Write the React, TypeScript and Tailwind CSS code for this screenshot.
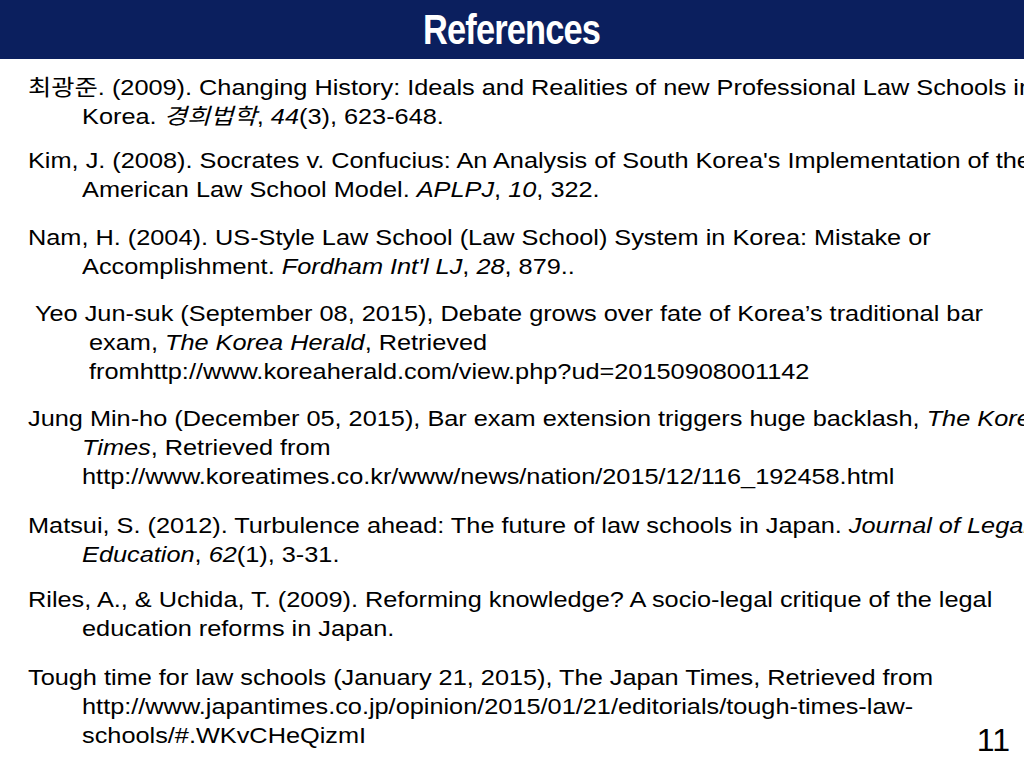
export default function App() {
  const refs: { indent?: boolean; lines: React.ReactNode[]; mb: string }[] = [
    {
      lines: [
        <>최광준. (2009). Changing History: Ideals and Realities of new Professional Law Schools in</>,
        <>Korea. <i>경희법학</i>, <i>44</i>(3), 623-648.</>,
      ],
      mb: "mb-[15px]",
    },
    {
      lines: [
        <>Kim, J. (2008). Socrates v. Confucius: An Analysis of South Korea's Implementation of the</>,
        <>American Law School Model. <i>APLPJ</i>, <i>10</i>, 322.</>,
      ],
      mb: "mb-[19px]",
    },
    {
      lines: [
        <>Nam, H. (2004). US-Style Law School (Law School) System in Korea: Mistake or</>,
        <>Accomplishment. <i>Fordham Int'l LJ</i>, <i>28</i>, 879..</>,
      ],
      mb: "mb-[18px]",
    },
    {
      indent: true,
      lines: [
        <>Yeo Jun-suk (September 08, 2015), Debate grows over fate of Korea’s traditional bar</>,
        <>exam, <i>The Korea Herald</i>, Retrieved</>,
        <>fromhttp://www.koreaherald.com/view.php?ud=20150908001142</>,
      ],
      mb: "mb-[18px]",
    },
    {
      lines: [
        <>Jung Min-ho (December 05, 2015), Bar exam extension triggers huge backlash, <i>The Korea</i></>,
        <><i>Times</i>, Retrieved from</>,
        <>http://www.koreatimes.co.kr/www/news/nation/2015/12/116_192458.html</>,
      ],
      mb: "mb-[20px]",
    },
    {
      lines: [
        <>Matsui, S. (2012). Turbulence ahead: The future of law schools in Japan. <i>Journal of Legal</i></>,
        <><i>Education</i>, <i>62</i>(1), 3-31.</>,
      ],
      mb: "mb-[16px]",
    },
    {
      lines: [
        <>Riles, A., &amp; Uchida, T. (2009). Reforming knowledge? A socio-legal critique of the legal</>,
        <>education reforms in Japan.</>,
      ],
      mb: "mb-[20px]",
    },
    {
      lines: [
        <>Tough time for law schools (January 21, 2015), The Japan Times, Retrieved from</>,
        <>http://www.japantimes.co.jp/opinion/2015/01/21/editorials/tough-times-law-</>,
        <>schools/#.WKvCHeQizmI</>,
      ],
      mb: "",
    },
  ]

  return (
    <div
      className="relative w-[1024px] h-[768px] overflow-hidden bg-white text-black"
      style={{ fontFamily: '"Liberation Sans", "Noto Sans CJK KR", sans-serif' }}
    >
      <div className="h-[59px] bg-[#0b1f5e] flex items-center justify-center">
        <h1 className="text-white font-bold text-[43px] scale-x-[0.8] tracking-tight">References</h1>
      </div>
      <div className="pt-[14px] pl-[28px] text-[22px] leading-[29px]">
        {refs.map((r, i) => (
          <div key={i} className={`${r.mb} ${r.indent ? "pl-[7px]" : ""}`}>
            {r.lines.map((l, j) => (
              <div
                key={j}
                className={`whitespace-nowrap origin-left scale-x-[1.15] ${j > 0 ? (r.indent ? "pl-[47px]" : "pl-[47px]") : ""}`}
              >
                {l}
              </div>
            ))}
          </div>
        ))}
      </div>
      <div className="absolute right-[14px] bottom-[4px] text-[32px]">11</div>
    </div>
  )
}
